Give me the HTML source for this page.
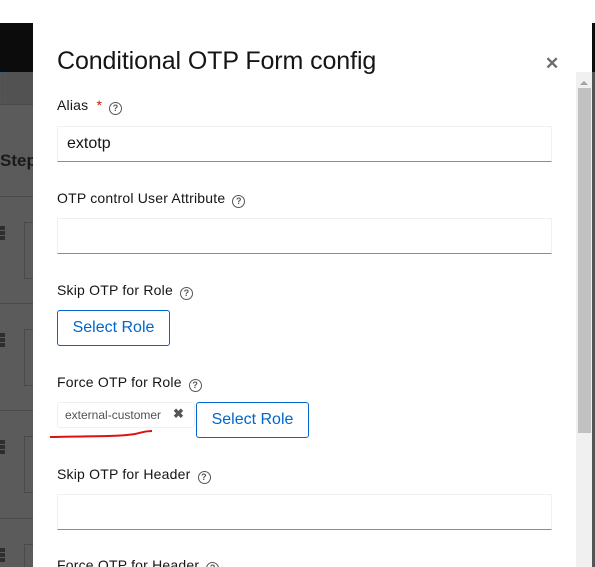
<!DOCTYPE html>
<html><head><style>
*{box-sizing:border-box;margin:0;padding:0}
html,body{width:595px;height:567px;overflow:hidden}
body{background:#fff;position:relative;font-family:"Liberation Sans",sans-serif}
.abs{position:absolute}
.bg{left:0;top:23px;width:595px;height:544px;background:#5b5b5b}
.topbar{left:0;top:23px;width:595px;height:49px;background:#0c0c0c}
.hl{left:0;width:33px;height:1px;background:#4a4a4a}
.grip{left:0;width:5px;height:15px;background:repeating-linear-gradient(#2e2e2e 0 4px,transparent 4px 5px)}
.box{left:24px;width:12px;height:57px;border:1px solid #4a4a4a;border-right:none}
.modal{left:33px;top:23px;width:559px;height:544px;background:#fff}
.title{left:57px;top:47px;font-size:25px;color:#151515;letter-spacing:-0.1px}
.close{left:545px;top:54px;font-size:17px;color:#6a6e73;font-weight:bold}
.lbl{left:57px;font-size:14px;color:#151515;letter-spacing:0.2px}
.q{display:inline-block;width:13px;height:13px;border:1.3px solid #555;border-radius:50%;font-size:9px;line-height:10px;text-align:center;color:#555;margin-left:7px;vertical-align:-1px;font-weight:bold}
.inp{left:57px;width:495px;height:36px;border:1px solid #f0f0f0;border-bottom:1px solid #8a8d90;font-size:16px;color:#151515;padding:8px 9px}
.btn{height:36px;border:1px solid #0066cc;border-radius:3px;color:#0066cc;font-size:16px;text-align:center;line-height:34px}
.chip{left:57px;top:402px;width:138px;height:26px;background:#fff;border:1px solid #f0f0f0;border-radius:3px;font-size:12px;color:#4f5255;padding:5px 7px}
.sb{left:576px;top:72px;width:16px;height:495px;background:#f0f0f0}
.thumb{left:578px;top:88px;width:13px;height:345px;background:#c1c1c1}
</style></head><body>
<div class="abs bg"></div>
<div class="abs topbar"></div>
<div class="abs" style="left:0;top:72px;width:33px;height:32px;background:#525252"></div>
<div class="abs" style="left:0;top:72px;width:6px;height:32px;border:1px solid #3a5a80;border-left:none"></div>
<div class="abs hl" style="top:104px"></div>
<div class="abs" style="left:0;top:151px;font-size:17px;color:#1a1a1a;font-weight:bold">Step</div>
<div class="abs hl" style="top:196px"></div>
<div class="abs hl" style="top:303px"></div>
<div class="abs hl" style="top:410px"></div>
<div class="abs hl" style="top:518px"></div>
<div class="abs grip" style="top:226px"></div>
<div class="abs grip" style="top:333px"></div>
<div class="abs grip" style="top:440px"></div>
<div class="abs grip" style="top:548px"></div>
<div class="abs box" style="top:222px"></div>
<div class="abs box" style="top:329px"></div>
<div class="abs box" style="top:436px"></div>
<div class="abs box" style="top:544px;height:23px;border-bottom:none"></div>
<div class="abs" style="left:592px;top:72px;width:3px;height:495px;background:#555"></div>
<div class="abs modal"></div>
<div class="abs title">Conditional OTP Form config</div>
<div class="abs close">✕</div>
<div class="abs lbl" style="top:97px">Alias <span style="color:#c9190b;margin-left:4px">*</span><span class="q">?</span></div>
<div class="abs inp" style="top:126px">extotp</div>
<div class="abs lbl" style="top:190px">OTP control User Attribute<span class="q">?</span></div>
<div class="abs inp" style="top:218px"></div>
<div class="abs lbl" style="top:282px">Skip OTP for Role<span class="q">?</span></div>
<div class="abs btn" style="left:57px;top:310px;width:113px">Select Role</div>
<div class="abs lbl" style="top:374px">Force OTP for Role<span class="q">?</span></div>
<div class="abs chip">external-customer<span style="position:absolute;left:115px;top:3px;font-size:13px;font-weight:bold;color:#555">✖</span></div>
<div class="abs btn" style="left:196px;top:402px;width:113px">Select Role</div>
<svg class="abs" style="left:45px;top:428px" width="110" height="12"><path d="M5 9 C40 8 70 9 90 6 C96 5 98 3 107 3" stroke="#e01010" stroke-width="2" fill="none"/></svg>
<div class="abs lbl" style="top:466px">Skip OTP for Header<span class="q">?</span></div>
<div class="abs inp" style="top:494px"></div>
<div class="abs lbl" style="top:557px">Force OTP for Header<span class="q">?</span></div>
<div class="abs sb"></div>
<div class="abs" style="left:580px;top:81px;width:0;height:0;border-left:4px solid transparent;border-right:4px solid transparent;border-bottom:4px solid #a0a0a0"></div>
<div class="abs thumb"></div>
</body></html>
